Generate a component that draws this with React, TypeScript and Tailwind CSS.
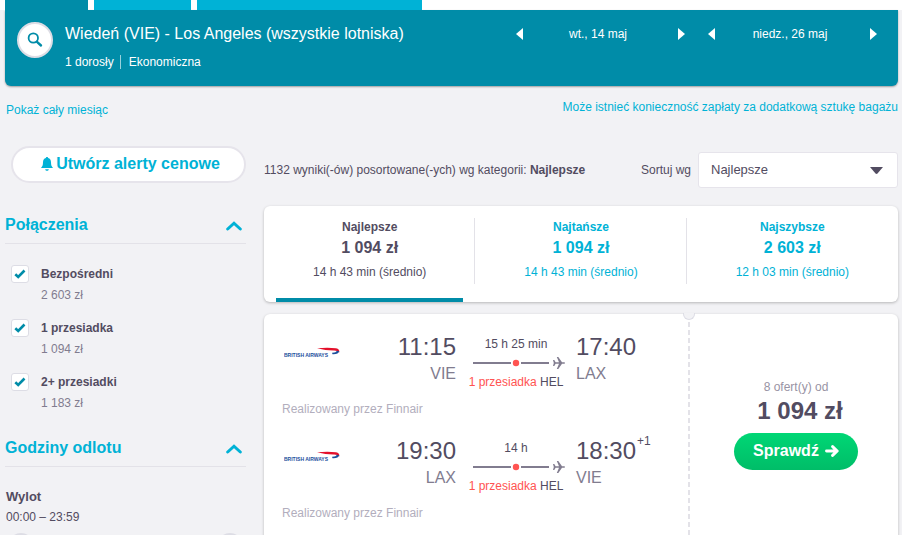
import React from 'react';

const sortTabs = [
  { label: 'Najlepsze', price: '1 094 zł', time: '14 h 43 min (średnio)', active: true },
  { label: 'Najtańsze', price: '1 094 zł', time: '14 h 43 min (średnio)', active: false },
  { label: 'Najszybsze', price: '2 603 zł', time: '12 h 03 min (średnio)', active: false },
];

const stops = [
  { id: 'direct', label: 'Bezpośredni', price: '2 603 zł' },
  { id: 'one-stop', label: '1 przesiadka', price: '1 094 zł' },
  { id: 'two-stops', label: '2+ przesiadki', price: '1 183 zł' },
];

export default function App() {
  return (
    <div className="h-screen overflow-hidden bg-[#f2f2f5] font-['Liberation_Sans',Arial,sans-serif] text-xs text-[#524c61]">
      <Header />
      <div className="flex items-start justify-between pl-[6px] pr-1 pt-3">
        <a href="#month" className="mt-1 leading-4 text-[#00b2d6]">Pokaż cały miesiąc</a>
        <a href="#baggage" className="mt-px leading-4 text-[#00b2d6]">Może istnieć konieczność zapłaty za dodatkową sztukę bagażu</a>
      </div>
      <div className="flex gap-[18px] pl-[5px] pr-1 pt-[28px]">
        <Sidebar />
        <Results />
      </div>
    </div>
  );
}

function Header() {
  return (
    <header>
      <nav className="flex h-[10px] gap-[6px] bg-white pl-[5px]">
        <a href="#flights" aria-label="Loty" className="w-[83px] bg-[#008ca8]" />
        <a href="#hotels" aria-label="Hotele" className="w-[97px] bg-[#00b2d6]" />
        <a href="#cars" aria-label="Wynajem samochodów" className="w-[225px] bg-[#00b2d6]" />
      </nav>
      <div className="ml-[5px] mr-1 flex h-[76px] items-start rounded-b-md bg-[#008ca8] text-white shadow-[0_1px_2px_rgba(0,0,0,0.35)]">
        <button aria-label="Szukaj" className="ml-3 mt-3 flex size-9 items-center justify-center rounded-full border-2 border-[#dddde5] bg-white">
          <svg width="16" height="16" viewBox="0 0 16 16" fill="none" stroke="#008ca8">
            <circle cx="6.3" cy="6" r="4.7" strokeWidth="1.8" />
            <path d="M10 9.800L14 13.500" strokeWidth="2.400" strokeLinecap="round" />
          </svg>
        </button>
        <div className="ml-3 mt-[14px] flex-1">
          <h1 className="text-base leading-5">Wiedeń (VIE) - Los Angeles (wszystkie lotniska)</h1>
          <div className="mt-[9px] flex items-center text-xs leading-[18px]">
            <span>1 dorosły</span>
            <span className="ml-[6px] mr-2 h-[14px] w-px bg-white/60" />
            <span>Ekonomiczna</span>
          </div>
        </div>
        <div className="mr-5 mt-4 flex gap-[22px]">
          <DatePicker label="wt., 14 maj" />
          <DatePicker label="niedz., 26 maj" />
        </div>
      </div>
    </header>
  );
}

function DatePicker({ label }: { label: string }) {
  return (
    <div className="flex w-[170px] items-center">
      <button aria-label="Poprzedni dzień">
        <svg width="8" height="12" viewBox="0 0 8 12" fill="#fff"><path d="M7 0v12L0 6z" /></svg>
      </button>
      <span className="flex-1 pr-[6px] text-center text-xs leading-4">{label}</span>
      <button aria-label="Następny dzień">
        <svg width="8" height="12" viewBox="0 0 8 12" fill="#fff"><path d="M0 0v12L7 6z" /></svg>
      </button>
    </div>
  );
}

function Sidebar() {
  return (
    <aside className="w-[241px] shrink-0">
      <button className="ml-[6px] flex h-[37px] w-[235px] items-center justify-center gap-[3px] rounded-full border-2 border-[#e6e4eb] bg-white pb-[2px] pl-1 text-base font-bold text-[#00b2d6]">
        <svg className="mt-px" width="12" height="14" viewBox="0 0 12 14" fill="#00b2d6">
          <path d="M6 0c.7 0 1.100.4 1.100 1C9.100 1.500 10 3.200 10 5.200 10 8.200 10.600 9.300 12 11H0c1.400-1.700 2-2.800 2-5.800C2 3.200 2.900 1.500 4.900 1 4.900.4 5.300 0 6 0z" />
          <path d="M4.200 12.200h3.600C7.600 13.300 6.900 13.800 6 13.800s-1.600-.5-1.800-1.600z" />
        </svg>
        Utwórz alerty cenowe
      </button>
      <SectionTitle title="Połączenia" className="mt-[31px]" />
      <div className="mt-[21px] flex flex-col gap-[15px]">
        {stops.map((s) => (
          <div key={s.id} className="flex items-start">
            <span className="relative ml-[6px] size-[18px]">
              <input
                id={s.id}
                type="checkbox"
                defaultChecked
                className="block size-[18px] appearance-none rounded-[3px] border border-[#dddde5] bg-white"
              />
              <svg className="pointer-events-none absolute left-[3px] top-1" width="12" height="10" viewBox="0 0 12 10" fill="none" stroke="#008ca8" strokeWidth="2.600">
                <path d="M1.300 5.300L4.200 8L10.500 1.500" />
              </svg>
            </span>
            <label htmlFor={s.id} className="ml-3">
              <span className="block text-xs font-bold leading-[18px]">{s.label}</span>
              <span className="mt-[3px] block text-xs leading-[18px] text-[#817c8f]">{s.price}</span>
            </label>
          </div>
        ))}
      </div>
      <SectionTitle title="Godziny odlotu" className="mt-[25px]" />
      <div className="mt-5 pl-px">
        <h3 className="text-[13px] font-bold leading-5">Wylot</h3>
        <p className="mt-px text-xs leading-[18px]">00:00 – 23:59</p>
        <div className="mt-[7px] flex justify-between pl-[2px] pr-[3px]">
          <button aria-label="Najwcześniejsza godzina" className="size-[26px] rounded-full border-2 border-[#dddde5] bg-white" />
          <button aria-label="Najpóźniejsza godzina" className="size-[26px] rounded-full border-2 border-[#dddde5] bg-white" />
        </div>
      </div>
    </aside>
  );
}

function SectionTitle({ title, className }: { title: string; className: string }) {
  return (
    <h2 className={`border-b border-[#e3e2e8] text-base font-bold text-[#00b2d6] ${className}`}>
      <button className="flex h-[29px] w-full items-start justify-between pr-1 pt-px leading-5">
        {title}
        <svg className="mt-[6px]" width="16" height="10" viewBox="0 0 16 10" fill="none" stroke="#00b2d6" strokeWidth="3" strokeLinecap="round">
          <path d="M1.700 8L8 2.200L14.300 8" />
        </svg>
      </button>
    </h2>
  );
}

function Results() {
  return (
    <main className="min-w-0 flex-1">
      <div className="mt-[6px] flex h-9 items-center">
        <p className="flex-1">
          1132 wyniki(-ów) posortowane(-ych) wg kategorii: <strong>Najlepsze</strong>
        </p>
        <label htmlFor="sort" className="mr-[7px]">Sortuj wg</label>
        <div className="relative">
          <select id="sort" className="block h-9 w-[200px] appearance-none rounded-[3px] border border-[#e6e4eb] bg-white pl-3 text-[13px]">
            <option>Najlepsze</option>
            <option>Najtańsze</option>
            <option>Najszybsze</option>
          </select>
          <svg className="pointer-events-none absolute right-[15px] top-[15px]" width="13" height="7" viewBox="0 0 13 7" fill="#524c61"><path d="M0 0h13L7.500 6.500q-1 .8-2 0z" /></svg>
        </div>
      </div>
      <div className="mt-[18px] flex h-24 rounded-md bg-white shadow-[0_1px_3px_rgba(0,0,0,0.25)]">
        {sortTabs.map((tab) => (
          <SortTab key={tab.label} {...tab} />
        ))}
      </div>
      <Ticket />
    </main>
  );
}

function SortTab({ label, price, time, active }: { label: string; price: string; time: string; active: boolean }) {
  return (
    <button className={`group relative flex flex-1 flex-col items-center pt-3 ${active ? '' : 'text-[#00b2d6]'}`}>
      <span className="font-bold leading-[18px]">{label}</span>
      <span className="text-base font-bold leading-6">{price}</span>
      <span className="mt-[3px] leading-[18px]">{time}</span>
      <span className="absolute right-0 top-3 h-[66px] w-px bg-[#e3e2e8] group-last:hidden" />
      {active && <span className="absolute inset-x-3 bottom-0 h-1 bg-[#008ca8]" />}
    </button>
  );
}

function Ticket() {
  return (
    <article className="mt-3 flex rounded-md bg-white shadow-[0_1px_3px_rgba(0,0,0,0.25)]">
      <div className="min-w-0 flex-1 pb-6 pl-[18px] pt-[18px]">
        <Leg depart="11:15" from="VIE" duration="15 h 25 min" arrive="17:40" to="LAX" />
        <Leg depart="19:30" from="LAX" duration="14 h" arrive="18:30" to="VIE" days="+1" />
      </div>
      <div className="relative w-[2px] bg-[repeating-linear-gradient(to_bottom,#e3e2e8_0px,#e3e2e8_5px,#fff_5px,#fff_8px)]">
        <span className="absolute -left-[5px] -top-px h-[7px] w-3 rounded-b-full border border-t-0 border-[#dddde5] bg-[#f2f2f5]" />
      </div>
      <div className="flex w-[208px] flex-col items-center pl-1 pt-16">
        <span className="leading-[18px] text-[#9893a4]">8 ofert(y) od</span>
        <span className="pl-2 text-2xl font-bold leading-[30px]">1 094 zł</span>
        <button className="mt-[7px] flex h-[37px] w-[124px] items-center justify-center gap-[6px] rounded-full bg-linear-to-b from-[#00d775] to-[#00bd68] pb-px text-base font-bold text-white">
          Sprawdź
          <svg width="14" height="12" viewBox="0 0 14 12" fill="none" stroke="#fff" strokeWidth="2.900" strokeLinecap="round" strokeLinejoin="round">
            <path d="M1.500 6H12M7.600 1.600L12.200 6L7.600 10.400" />
          </svg>
        </button>
      </div>
    </article>
  );
}

interface LegProps {
  depart: string;
  from: string;
  duration: string;
  arrive: string;
  to: string;
  days?: string;
}

function Leg({ depart, from, duration, arrive, to, days }: LegProps) {
  return (
    <div className="h-[104px]">
      <div className="flex">
        <div className="w-[80px] pl-[2px] pt-[15px]"><AirlineLogo /></div>
        <div className="w-[94px] text-right">
          <div className="text-2xl leading-[30px]">{depart}</div>
          <div className="text-base leading-6 text-[#817c8f]">{from}</div>
        </div>
        <div className="flex w-[120px] flex-col items-center pt-[3px]">
          <span className="leading-[18px]">{duration}</span>
          <RouteLine />
          <span className="whitespace-nowrap leading-[18px]">
            <span className="text-[#ff5452]">1 przesiadka</span> HEL
          </span>
        </div>
        <div>
          <div className="flex">
            <span className="text-2xl leading-[30px]">{arrive}</span>
            {days && <sup className="top-0 ml-px text-xs leading-[10px]">{days}</sup>}
          </div>
          <div className="text-base leading-6 text-[#817c8f]">{to}</div>
        </div>
      </div>
      <p className="mt-[9px] leading-[18px] text-[#b2aebd]">Realizowany przez Finnair</p>
    </div>
  );
}

function RouteLine() {
  return (
    <svg className="my-1 ml-[6px]" width="92" height="12" viewBox="0 0 92 12">
      <path d="M0 6H38M48 6H76" stroke="#817c8f" strokeWidth="2" />
      <circle cx="43" cy="6" r="3.200" fill="#ff5452" />
      <path fill="#817c8f" d="M80 3h1.300l1.300 2.200H86L83.800 0h1.500L89 5.200h2.200q.8.3.8.8t-.8.8H89L85.300 12h-1.500L86 6.800h-3.400L81.300 9H80l.8-3z" />
    </svg>
  );
}

function AirlineLogo() {
  return (
    <svg width="56" height="12" viewBox="0 0 56 12" role="img" aria-label="British Airways">
      <path d="M33 1.200Q44 .3 52 1.200Q56 2 55.200 5.500Q54 3.600 50 3.500Q42 3.600 33 1.200z" fill="#e4112b" />
      <path d="M55.200 4.200Q54.500 7.500 48.500 7.200L48 5.800Q52 6 53 3.800z" fill="#1c4f9c" />
      <text x="0" y="10" fontSize="5" fontWeight="700" fill="#1c4f9c">BRITISH AIRWAYS</text>
    </svg>
  );
}
